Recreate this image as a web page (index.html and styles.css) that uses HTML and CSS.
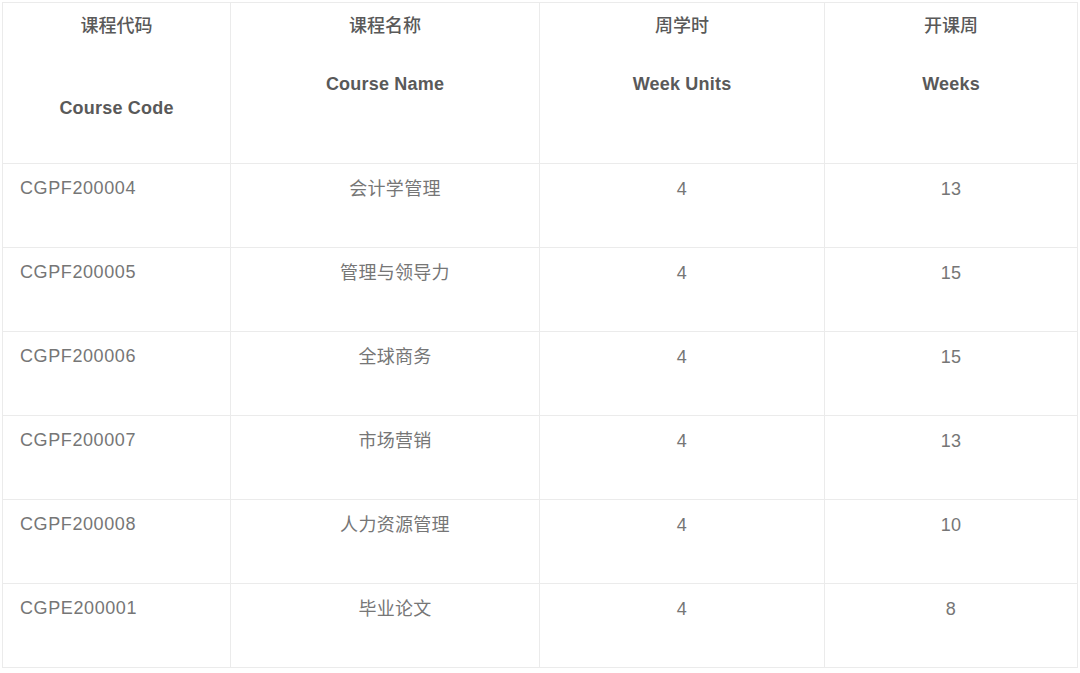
FILE: index.html
```html
<!DOCTYPE html>
<html lang="zh-CN">
<head>
<meta charset="utf-8">
<title>课程表</title>
<link rel="stylesheet" href="styles.css">
</head>
<body>
<table class="courses">
  <colgroup>
    <col class="c1">
    <col class="c2">
    <col class="c3">
    <col class="c4">
  </colgroup>
  <thead>
    <tr>
      <th><span class="zh">课程代码</span><span class="en en-low">Course Code</span></th>
      <th><span class="zh">课程名称</span><span class="en">Course Name</span></th>
      <th><span class="zh">周学时</span><span class="en">Week Units</span></th>
      <th><span class="zh">开课周</span><span class="en">Weeks</span></th>
    </tr>
  </thead>
  <tbody>
    <tr><td class="code">CGPF200004</td><td class="name">会计学管理</td><td>4</td><td>13</td></tr>
    <tr><td class="code">CGPF200005</td><td class="name">管理与领导力</td><td>4</td><td>15</td></tr>
    <tr><td class="code">CGPF200006</td><td class="name">全球商务</td><td>4</td><td>15</td></tr>
    <tr><td class="code">CGPF200007</td><td class="name">市场营销</td><td>4</td><td>13</td></tr>
    <tr><td class="code">CGPF200008</td><td class="name">人力资源管理</td><td>4</td><td>10</td></tr>
    <tr><td class="code">CGPE200001</td><td class="name">毕业论文</td><td>4</td><td>8</td></tr>
  </tbody>
</table>
</body>
</html>
```
FILE: styles.css
```css
html, body {
  margin: 0;
  padding: 0;
  background: #ffffff;
}
body {
  padding: 2px 2px 0 2px;
  font-family: "Liberation Sans", "Noto Sans CJK SC", sans-serif;
}
.courses {
  width: 1075px;
  table-layout: fixed;
  border-collapse: collapse;
  border: 1px solid #ebebeb;
}
.c1 { width: 228px; }
.c2 { width: 309px; }
.c3 { width: 285px; }
.c4 { width: 253px; }
.courses th,
.courses td {
  border: 1px solid #ebebeb;
  vertical-align: top;
  text-align: center;
  padding: 0;
}
.courses th {
  height: 161px;
  color: #595959;
  font-size: 18px;
  line-height: 26px;
  padding-top: 10px;
  box-sizing: border-box;
}
.zh, .en {
  display: block;
}
.zh {
  font-weight: 500;
}
.en {
  font-weight: 600;
  margin-top: 32px;
  letter-spacing: 0.2px;
}
.en-low {
  margin-top: 56px;
}
.courses td {
  height: 84px;
  box-sizing: border-box;
  color: #767676;
  font-size: 18px;
  line-height: 26px;
  padding-top: 12px;
  letter-spacing: 0.3px;
}
.courses td.code {
  text-align: left;
  padding-left: 17px;
  padding-top: 11px;
  letter-spacing: 0.6px;
}
.courses td.name {
  padding-left: 20px;
}
```
